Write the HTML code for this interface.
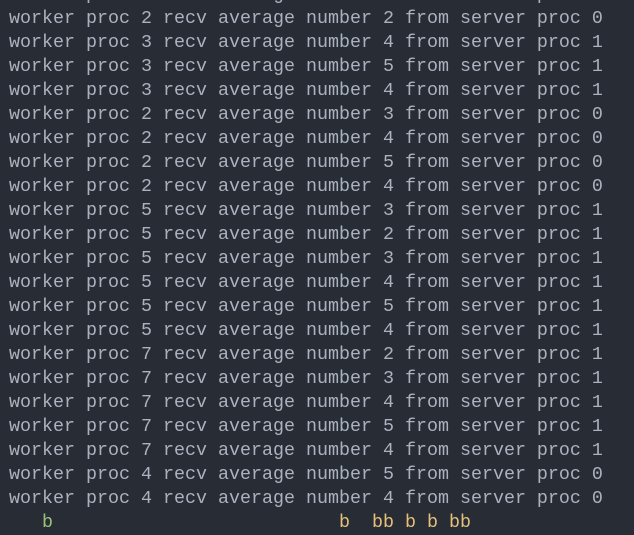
<!DOCTYPE html>
<html><head><style>
html,body{margin:0;padding:0;background:#282c34;width:634px;height:515px;overflow:hidden}
pre{margin:0;position:absolute;left:9px;top:-17px;font-family:"Liberation Mono",monospace;font-size:18.33px;line-height:24px;color:#abb2bf;white-space:pre}
.g{color:#98c379}.y{color:#e5c07b}
</style></head><body><pre>worker proc 2 recv average number 4 from server proc 0
worker proc 2 recv average number 2 from server proc 0
worker proc 3 recv average number 4 from server proc 1
worker proc 3 recv average number 5 from server proc 1
worker proc 3 recv average number 4 from server proc 1
worker proc 2 recv average number 3 from server proc 0
worker proc 2 recv average number 4 from server proc 0
worker proc 2 recv average number 5 from server proc 0
worker proc 2 recv average number 4 from server proc 0
worker proc 5 recv average number 3 from server proc 1
worker proc 5 recv average number 2 from server proc 1
worker proc 5 recv average number 3 from server proc 1
worker proc 5 recv average number 4 from server proc 1
worker proc 5 recv average number 5 from server proc 1
worker proc 5 recv average number 4 from server proc 1
worker proc 7 recv average number 2 from server proc 1
worker proc 7 recv average number 3 from server proc 1
worker proc 7 recv average number 4 from server proc 1
worker proc 7 recv average number 5 from server proc 1
worker proc 7 recv average number 4 from server proc 1
worker proc 4 recv average number 5 from server proc 0
worker proc 4 recv average number 4 from server proc 0
   <span class="g">b</span>                          <span class="y">b  bb b b bb</span></pre></body></html>
